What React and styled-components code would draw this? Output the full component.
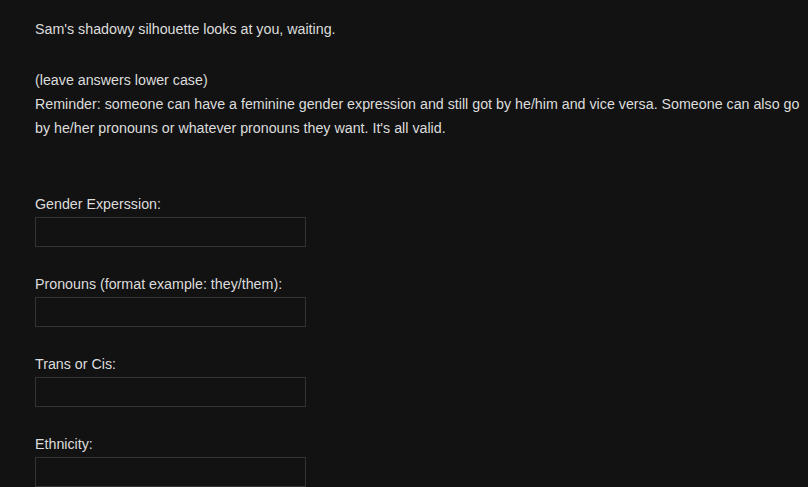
import React from "react";
import styled, { createGlobalStyle } from "styled-components";

const GlobalStyle = createGlobalStyle`
  html, body {
    margin: 0;
    padding: 0;
    background-color: #121212;
  }
  body {
    font-family: "Liberation Sans", Arial, sans-serif;
  }
`;

const Page = styled.div`
  box-sizing: border-box;
  width: 808px;
  height: 487px;
  overflow: hidden;
  padding: 17px 4px 0 35px;
  color: #dcdcdc;
  font-size: 14.25px;
  line-height: 24px;
`;

const Para = styled.p`
  margin: 0 0 ${(props) => (props.bottom ? `${props.bottom}px` : "0px")};
`;

const Field = styled.div`
  display: flex;
  flex-direction: column;
  margin-top: ${(props) => (props.top ? `${props.top}px` : "0px")};
`;

const Label = styled.label`
  display: block;
  line-height: 16px;
  margin-bottom: 5px;
  padding-top: 1px;
`;

const Input = styled.input`
  box-sizing: border-box;
  width: 271px;
  height: 30px;
  margin: 0;
  padding: 4px 6px;
  background-color: #121212;
  border: 1px solid #343434;
  color: #dcdcdc;
  font-family: inherit;
  font-size: 14px;
  outline: none;
`;

const fields = [
  "Gender Experssion:",
  "Pronouns (format example: they/them):",
  "Trans or Cis:",
  "Ethnicity:",
];

export default function App() {
  return (
    <>
      <GlobalStyle />
      <Page>
        <Para bottom={27}>Sam's shadowy silhouette looks at you, waiting.</Para>
        <Para>(leave answers lower case)</Para>
        <Para>
          Reminder: someone can have a feminine gender expression and still got
          by he/him and vice versa. Someone can also go by he/her pronouns or
          whatever pronouns they want. It's all valid.
        </Para>
        {fields.map((label, i) => (
          <Field key={label} top={i === 0 ? 55 : 28}>
            <Label>{label}</Label>
            <Input type="text" />
          </Field>
        ))}
      </Page>
    </>
  );
}
